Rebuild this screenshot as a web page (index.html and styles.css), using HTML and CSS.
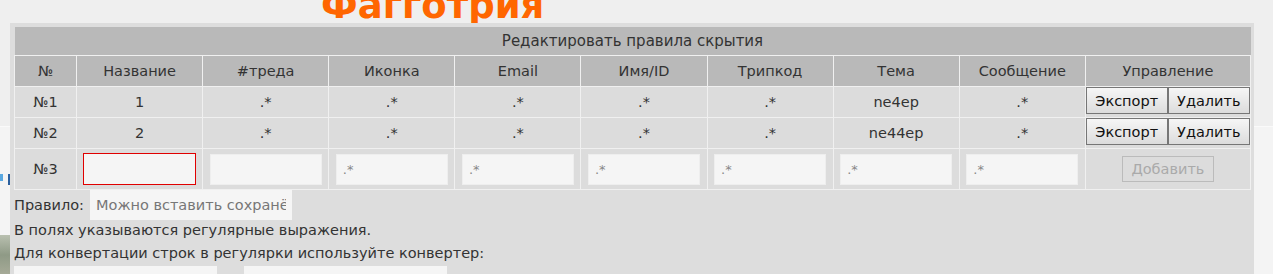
FILE: index.html
```html
<!DOCTYPE html>
<html lang="ru">
<head>
<meta charset="utf-8">
<title>Фагготрия</title>
<link rel="stylesheet" href="styles.css">
</head>
<body>
<div class="page">
  <header class="site-head">
    <div class="site-title">Фагготрия</div>
  </header>
  <main class="site-body">
    <div class="side-link"><span class="l1"></span><span class="l2"></span></div>
    <div class="side-pic"></div>
  </main>
</div>

<div class="panel">
  <table class="rules">
    <colgroup>
      <col class="c-num"><col class="c-std"><col class="c-std"><col class="c-std"><col class="c-std"><col class="c-std"><col class="c-std"><col class="c-std"><col class="c-std"><col class="c-ctl">
    </colgroup>
    <thead>
      <tr class="r-title"><th colspan="10">Редактировать правила скрытия</th></tr>
      <tr class="r-head">
        <th>№</th><th>Название</th><th>#треда</th><th>Иконка</th><th>Email</th><th>Имя/ID</th><th>Трипкод</th><th>Тема</th><th>Сообщение</th><th>Управление</th>
      </tr>
    </thead>
    <tbody>
      <tr class="r-row">
        <td>№1</td><td>1</td><td>.*</td><td>.*</td><td>.*</td><td>.*</td><td>.*</td><td>ne4ep</td><td>.*</td>
        <td class="ctl"><div class="actions"><button class="btn">Экспорт</button><button class="btn">Удалить</button></div></td>
      </tr>
      <tr class="r-row">
        <td>№2</td><td>2</td><td>.*</td><td>.*</td><td>.*</td><td>.*</td><td>.*</td><td>ne44ep</td><td>.*</td>
        <td class="ctl"><div class="actions"><button class="btn">Экспорт</button><button class="btn">Удалить</button></div></td>
      </tr>
      <tr class="r-new">
        <td>№3</td>
        <td><input class="fld invalid" type="text"></td>
        <td><input class="fld" type="text"></td>
        <td><input class="fld" type="text" placeholder=".*"></td>
        <td><input class="fld" type="text" placeholder=".*"></td>
        <td><input class="fld" type="text" placeholder=".*"></td>
        <td><input class="fld" type="text" placeholder=".*"></td>
        <td><input class="fld" type="text" placeholder=".*"></td>
        <td><input class="fld" type="text" placeholder=".*"></td>
        <td><button class="add" disabled>Добавить</button></td>
      </tr>
    </tbody>
  </table>
  <div class="rule-line">
    <span class="rule-label">Правило:</span>
    <input class="rule-input" type="text" placeholder="Можно вставить сохранённое правило">
  </div>
  <div class="note">В полях указываются регулярные выражения.</div>
  <div class="note">Для конвертации строк в регулярки используйте конвертер:</div>
  <div class="conv">
    <input class="conv-input" type="text">
    <input class="conv-input" type="text">
  </div>
</div>
</body>
</html>
```
FILE: styles.css
```css
html, body {
  margin: 0;
  padding: 0;
}
body {
  background: #efefef;
  font-family: "DejaVu Sans", "Liberation Sans", sans-serif;
  color: #333;
  overflow: hidden;
}
.page {
  height: 274px;
}
.site-head {
  display: flow-root;
  height: 126px;
  background: #efefef;
}
.site-title {
  padding-left: 321px;
  font-family: "DejaVu Sans", sans-serif;
  font-size: 37px;
  font-weight: bold;
  color: #ff6600;
  line-height: 1;
  margin-top: -13px;
}
.site-body {
  background: #f4f4f4;
  border-top: 1px solid #fafafa;
  height: 150px;
}
.side-link {
  display: flex;
  gap: 4px;
  padding-top: 47px;
}
.side-link .l1 {
  width: 3px;
  height: 7px;
  background: #5aa8e0;
}
.side-link .l2 {
  width: 3px;
  height: 11px;
  margin-left: 1px;
  background: #2a5f9e;
}
.side-pic {
  margin-top: 50px;
  width: 12px;
  height: 40px;
  background: linear-gradient(180deg, #b9c0b0, #8f9a86 50%, #a7ab98);
}

/* overlay panel */
.panel {
  position: absolute;
  left: 10px;
  top: 23px;
  width: 1237px;
  height: 260px;
  padding: 4px 3px 0 4px;
  background: #dddddd;
  font-size: 14.5px;
}
.rules {
  width: 1237px;
  border-collapse: collapse;
  table-layout: fixed;
  font-size: 14.5px;
}
.c-num { width: 62px; }
.c-std { width: 126px; }
.c-ctl { width: 165px; }
.rules th, .rules td {
  border: 1px solid #f0f0f0;
  padding: 0;
  text-align: center;
  vertical-align: middle;
  font-weight: normal;
}
.r-title th {
  border: none;
  background: #b9b9b9;
  height: 28px;
  font-size: 15px;
}
.r-head th {
  background: #b9b9b9;
  height: 30px;
}
.r-row td {
  background: #dcdcdc;
  height: 30px;
}
.r-new td {
  background: #dcdcdc;
  height: 40px;
}
.rules td.ctl {
  vertical-align: top;
}
.actions {
  display: flex;
}
.btn {
  flex: 1 1 auto;
  height: 27px;
  margin: 0;
  padding: 0 6px;
  border: 1px solid #767676;
  border-radius: 0;
  background: linear-gradient(180deg, #f6f6f6, #dcdcdc);
  font-family: "DejaVu Sans", sans-serif;
  font-size: 14.5px;
  color: #111;
}
.fld {
  box-sizing: border-box;
  width: 112px;
  height: 31px;
  margin: 0;
  padding: 0 6px;
  border: 1px solid #eeeeee;
  background: #f5f5f5;
  font-family: "DejaVu Sans", sans-serif;
  font-size: 13px;
  color: #333;
  display: inline-block;
  vertical-align: middle;
  outline: none;
}
.fld::placeholder {
  color: #888;
}
.fld.invalid {
  border-color: #e00000;
  width: 113px;
  height: 32px;
}
.add {
  box-sizing: border-box;
  width: 92px;
  height: 26px;
  margin: 0;
  padding: 0;
  border: 1px solid #bbbbbb;
  border-radius: 0;
  background: transparent;
  color: #aaaaaa;
  font-family: "DejaVu Sans", sans-serif;
  font-size: 14.5px;
}
.rule-line {
  display: flex;
  align-items: center;
  gap: 6px;
  height: 28px;
  margin-top: 1px;
}
.rule-input {
  box-sizing: border-box;
  width: 202px;
  height: 30px;
  margin: 0;
  padding: 0 6px;
  border: none;
  background: #f5f5f5;
  font-family: "DejaVu Sans", sans-serif;
  font-size: 14.5px;
  color: #333;
  outline: none;
}
.rule-input::placeholder {
  color: #777;
}
.note {
  line-height: 23px;
}
.note:first-of-type {
  margin-top: 1px;
}
.conv {
  display: flex;
  gap: 27px;
  margin-top: 1px;
}
.conv-input {
  box-sizing: border-box;
  width: 203px;
  height: 30px;
  margin: 0;
  border: none;
  background: #f5f5f5;
}
```
